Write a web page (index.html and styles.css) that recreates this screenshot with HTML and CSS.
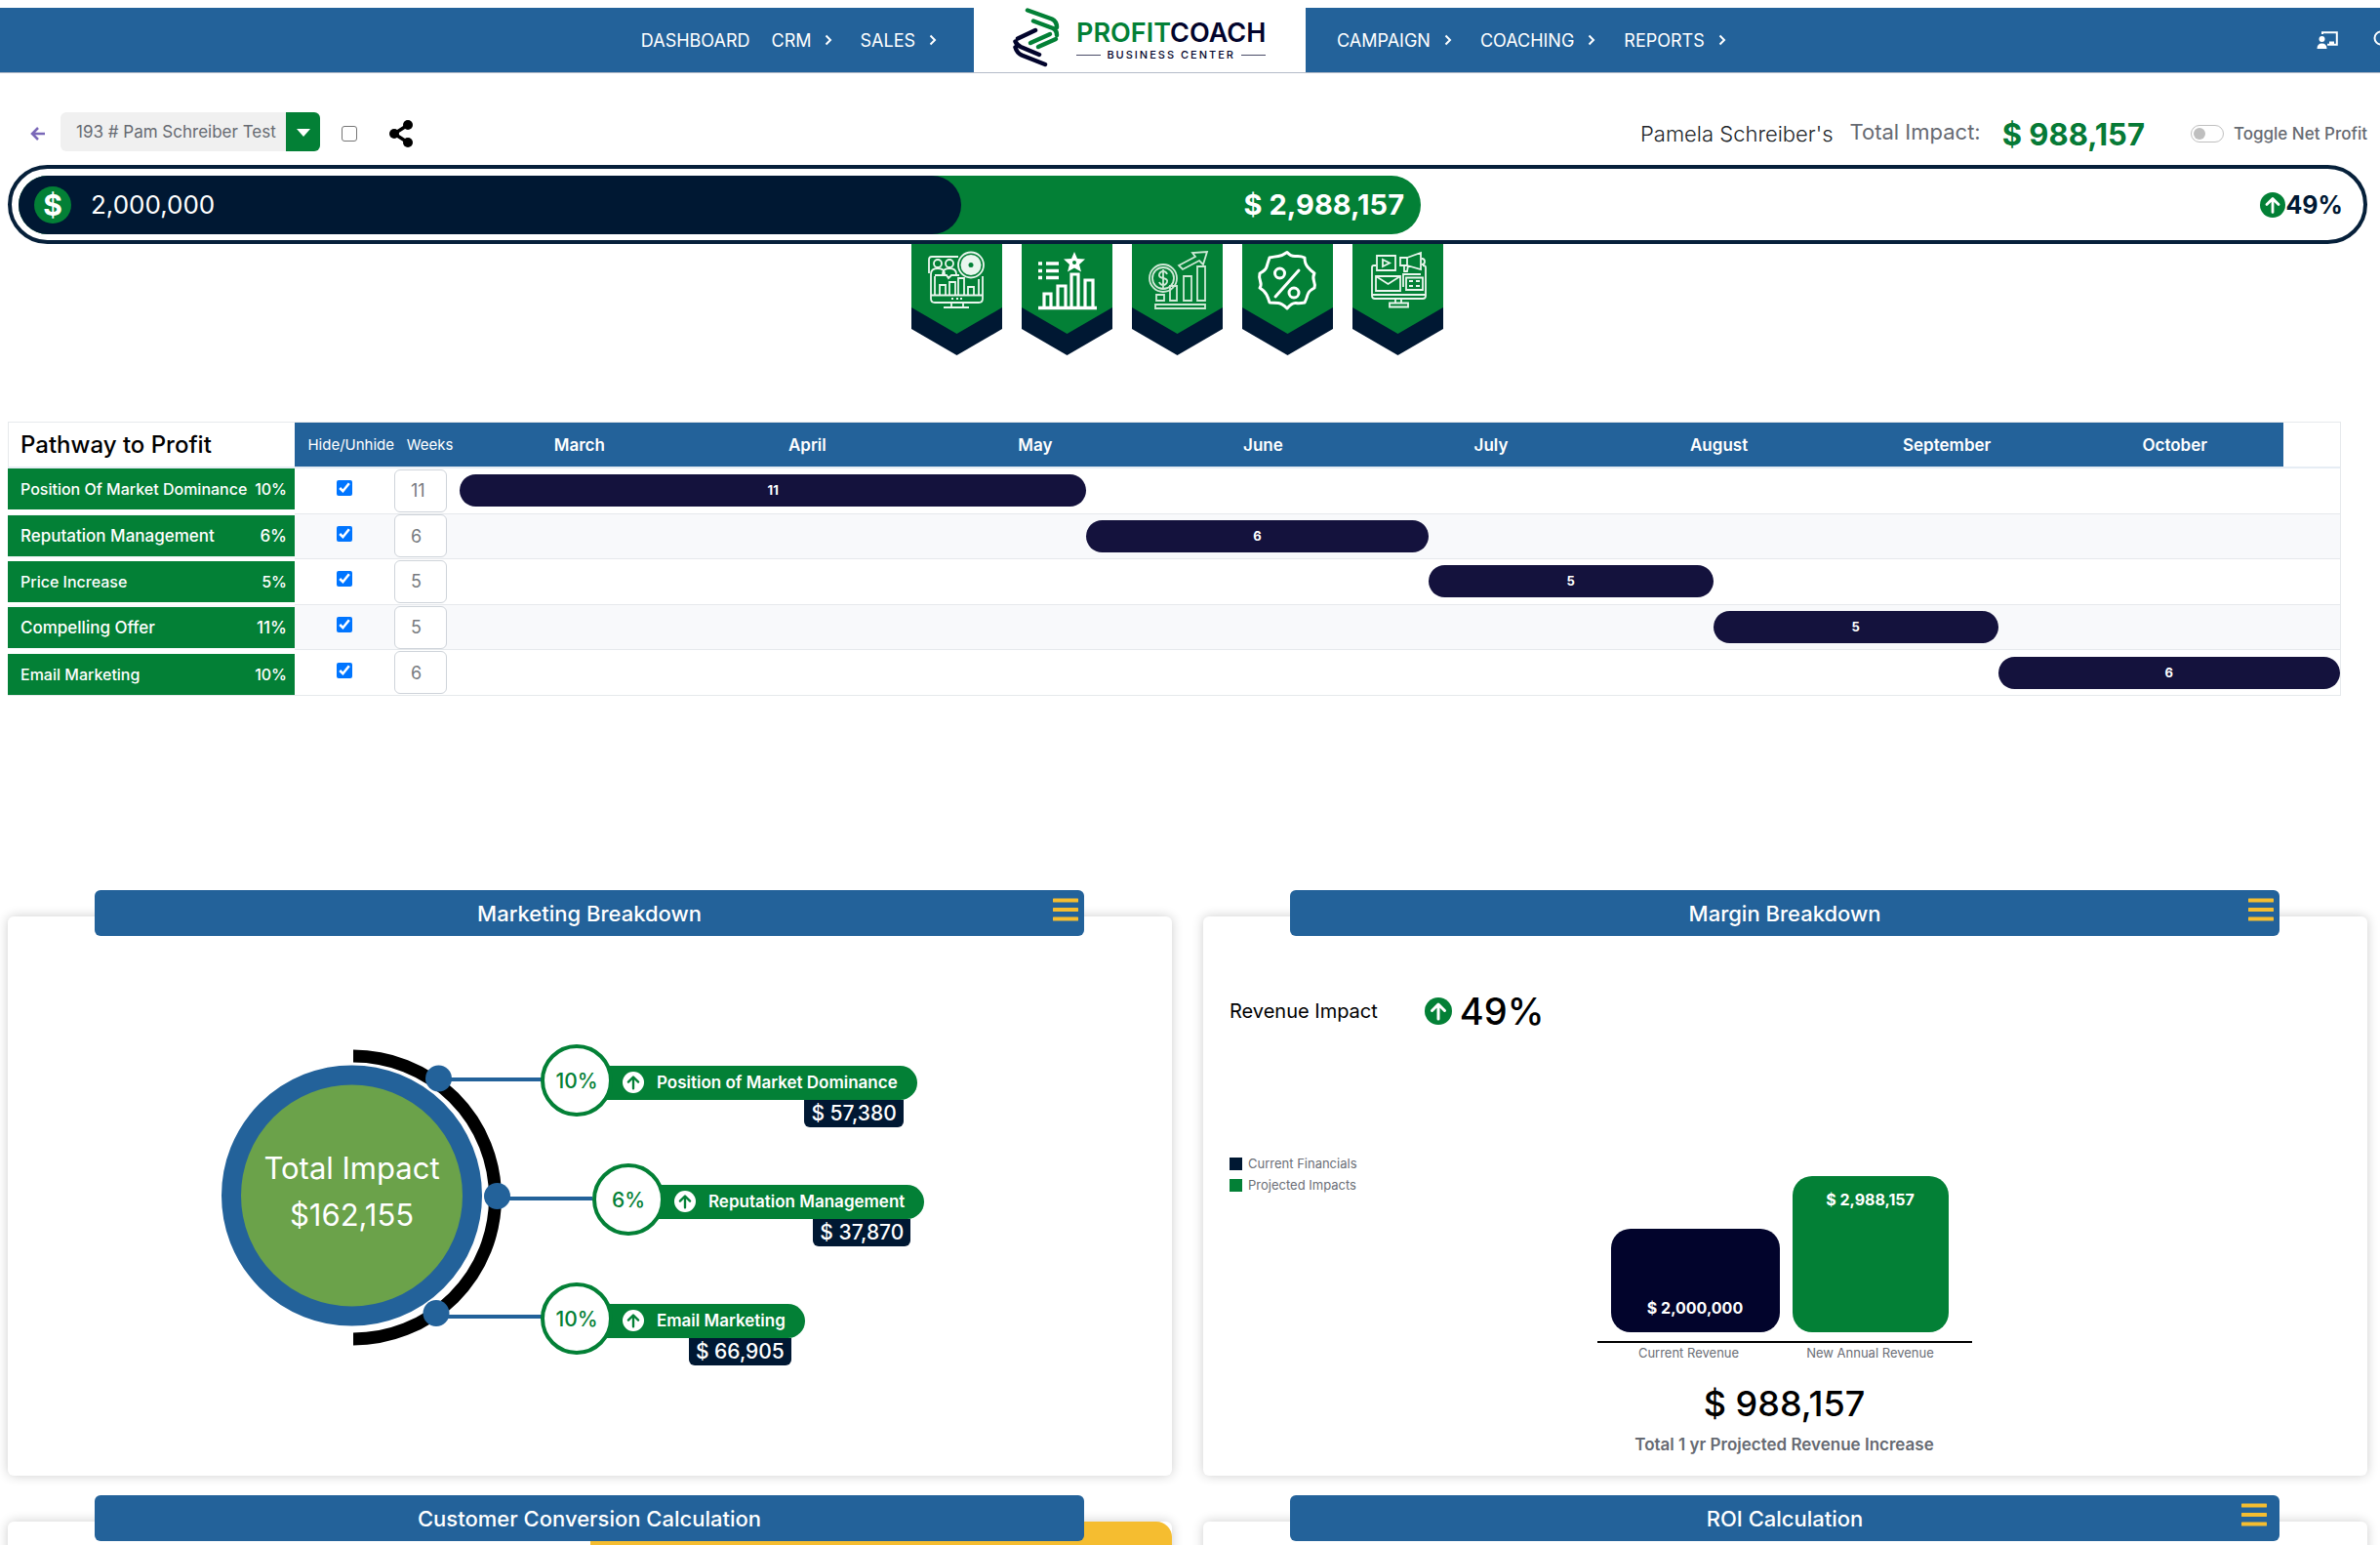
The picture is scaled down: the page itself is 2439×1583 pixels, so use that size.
FILE: index.html
```html
<!DOCTYPE html>
<html lang="en">
<head>
<meta charset="utf-8">
<title>Profit Coach Business Center</title>
<link rel="stylesheet" href="styles.css">
</head>
<body>
<svg class="defs" aria-hidden="true">
  <symbol id="up" viewBox="0 0 28 28"><circle cx="14" cy="14" r="14" fill="var(--disc)"/><path d="M14 22V7.500M7.500 13.500L14 7l6.500 6.500" fill="none" stroke="var(--arrow)" stroke-width="3" stroke-linecap="round" stroke-linejoin="round"/></symbol>
  <symbol id="chev" viewBox="0 0 8 12"><path d="M1.500 1.500L6 6l-4.500 4.500" fill="none" stroke="#fff" stroke-width="2"/></symbol>
  <symbol id="menu" viewBox="0 0 26 24"><path d="M1 2.500h24M1 12h24M1 21.500h24" stroke="#f5bd30" stroke-width="4" stroke-linecap="round"/></symbol>
  <symbol id="ribbon" viewBox="0 0 93 114"><path d="M0 60V87L46.500 114 93 87V60z" fill="#001833"/><path d="M0 0H93V65L46.500 92 0 65z" fill="#038036"/></symbol>
</svg>

<header class="nav">
  <nav class="nav-side nav-left">
    <a href="#">DASHBOARD</a>
    <a href="#">CRM <svg class="chev"><use href="#chev"/></svg></a>
    <a href="#">SALES <svg class="chev"><use href="#chev"/></svg></a>
  </nav>
  <a class="logo" href="#">
    <svg class="logo-mark" viewBox="0 0 48 62" fill="none" stroke-width="4.500" stroke-linecap="round">
      <path d="M15 2.500L40 11.500Q45 14 45 20M21 13.500L41 21Q45 23 45 28" stroke="#038036"/>
      <path d="M38 27L18 36M44 32L26 40" stroke="#038036"/>
      <path d="M23 23L5 31.500M2.500 34.500Q4 38 8 40L27 48M2.500 40.500Q4 46 9 48.500L33 58" stroke="#02042c"/>
    </svg>
    <span class="logo-text">
      <span class="logo-name"><b>PROFIT</b>COACH</span>
      <span class="logo-sub">BUSINESS CENTER</span>
    </span>
  </a>
  <nav class="nav-side nav-right">
    <a href="#">CAMPAIGN <svg class="chev"><use href="#chev"/></svg></a>
    <a href="#">COACHING <svg class="chev"><use href="#chev"/></svg></a>
    <a href="#">REPORTS <svg class="chev"><use href="#chev"/></svg></a>
    <span class="nav-icons">
      <button type="button" aria-label="Training"><svg width="22" height="18" viewBox="0 0 22 18"><path d="M6 3V1.200h14.800v12.600H11" fill="none" stroke="#fff" stroke-width="2"/><circle cx="5.500" cy="8" r="3" fill="#fff"/><path d="M.5 18q0-5.500 5-5.500t5 5.500z" fill="#fff"/><path d="M13 10.500h5v3.500h-5z" fill="#fff"/></svg></button>
      <button type="button" aria-label="Search"><svg width="20" height="20" viewBox="0 0 20 20"><circle cx="8" cy="8" r="6.500" fill="none" stroke="#fff" stroke-width="2"/><path d="M13 13l6 6" stroke="#fff" stroke-width="2"/></svg></button>
    </span>
  </nav>
</header>

<main>
  <section class="tools">
    <a class="back" href="#" aria-label="Back"><svg width="16" height="16" viewBox="0 0 16 16"><path d="M15 8H2M8 2L2 8l6 6" fill="none" stroke="#7a68b8" stroke-width="2.500"/></svg></a>
    <span class="picker">
      <select aria-label="Client"><option>193 # Pam Schreiber Test</option></select>
      <span class="picker-arrow"></span>
    </span>
    <input class="box" type="checkbox" aria-label="Select client">
    <button class="share" type="button" aria-label="Share"><svg width="24" height="28" viewBox="0 0 24 28"><path d="M19 5L5 14l14 9" fill="none" stroke="#000" stroke-width="3.500"/><circle cx="19" cy="5" r="5"/><circle cx="5" cy="14" r="5"/><circle cx="19" cy="23" r="5"/></svg></button>
    <span class="owner">Pamela Schreiber's</span>
    <span class="impact-label">Total Impact:</span>
    <strong class="impact-total">$ 988,157</strong>
    <label class="toggle"><input type="checkbox" role="switch">Toggle Net Profit</label>
  </section>

  <section class="meter">
    <div class="meter-projected">
      <div class="meter-current"><span class="coin">$</span>2,000,000</div>
      <span class="meter-value">$ 2,988,157</span>
    </div>
    <span class="meter-gain"><svg><use href="#up"/></svg>49%</span>
  </section>

  <section class="ribbons">
    <svg viewBox="0 0 93 114"><use href="#ribbon"/><g fill="none" stroke="#eaf6ee" stroke-width="1.800">
      <path d="M48 13H21q-3 0-3 3v14M20 31v25q0 4 4 4h45q4 0 4-4V33"/><path d="M24 33v19M69 36v16M20 52.500h53"/>
      <circle cx="27" cy="20" r="4"/><circle cx="39" cy="20" r="4"/><path d="M20 31q0-6 7-6t7 6M32 31q0-6 7-6t7 6M24 32h12l2 3 3-3h8"/>
      <path d="M29 52V42h6v10M39 52V39h6v13M48 52V35h6v17M58 52V44h6v8M41 60v5M53 60v5M33 65h26"/><circle cx="61" cy="21.500" r="13"/></g><circle cx="61" cy="21.500" r="10.500" fill="#eaf6ee"/><circle cx="61" cy="21.500" r="2.500" fill="#038036"/><path d="M41 56h2M46 56h2M50 56h2" stroke="#eaf6ee" stroke-width="2"/></svg>
    <svg viewBox="0 0 93 114"><use href="#ribbon"/><path d="M17 20h4M25 20h13M17 27.500h4M25 27.500h13M17 34.500h4M25 34.500h13" stroke="#fff" stroke-width="3.500"/><path d="M54 8l3 7 8 .5-6 5.500 2 7.500-7-4-7 4 2-7.500-6-5.500 8-.5z" fill="#fff"/><circle cx="54" cy="19" r="2" fill="#038036"/><path d="M17 65.500h60" stroke="#fff" stroke-width="3.500"/><path d="M23 65V51h7v14M37 65V43h8v22M51 65V31h7v34M65 65V37h8v28" fill="none" stroke="#fff" stroke-width="3.200"/></svg>
    <svg viewBox="0 0 93 114"><use href="#ribbon"/><g fill="none" stroke="#cfe9d6" stroke-width="1.800"><circle cx="32" cy="35" r="14"/><circle cx="32" cy="35" r="11"/><path d="M36 31q-1-3-4-3t-4 3 4 4 4 4-4 3-4-3M32 26v19"/><path d="M48 22l17-9-3-4 15-1-4 13-4-4-17 9zM25 52h8v6h-8zM39 43h7v15h-7zM53 33h8v25h-8zM67 23h8v35h-8zM24 62h51v4H24z"/></g></svg>
    <svg viewBox="0 0 93 114"><use href="#ribbon"/><g fill="none" stroke="#fff" stroke-width="3" stroke-linejoin="round"><path d="M46 8.500Q50 13 55 12.500T64 14q0 6 3 9.500T74 30q-2 4-.5 8T74 45q-6 3-7 7t-3 8q-5 1-9 .5T46 66q-5-5-9-5.500T28 60q-1-4-3-8t-7-7q2-3 .5-7T18 30q6-3 7-6.500T28 14q5-1 9-1.500T46 8.500z"/><circle cx="38.500" cy="30" r="5"/><circle cx="53" cy="50" r="5"/><path d="M58 27L34 54" stroke-linecap="round"/></g></svg>
    <svg viewBox="0 0 93 114"><use href="#ribbon"/><g fill="none" stroke="#eaf6ee" stroke-width="1.800"><path d="M24 22h-2q-2 0-2 2v29q0 3 3 3h49q3 0 3-3V24q0-2-3-2M20 52h55M44 56v4M50 56v4M38 60.500h19v4H38z"/><path d="M25 12h19v15H25zM31 16v7l7-3.500zM24 33h25v15H24zM24 33l12.500 8L49 33"/><path d="M49 14h7v8h-7zM56 14l14-5v17l-14-4M53 22v6h3l1-6M71 15q3 0 3 3t-3 3M52 44V31h18M55 34.500h17V47H55zM58 38h4M65 38h4M58 43h4M65 43h4"/></g></svg>
  </section>

  <table class="path">
    <colgroup><col class="c-name"><col class="c-hide"><col class="c-weeks"><col span="33"></colgroup>
    <thead>
      <tr><th class="path-title">Pathway to Profit</th><th class="small hide">Hide/Unhide</th><th class="small">Weeks</th>
      <th colspan="4">March</th><th colspan="4">April</th><th colspan="4">May</th><th colspan="4">June</th><th colspan="4">July</th><th colspan="4">August</th><th colspan="4">September</th><th colspan="4">October</th><th class="blank"></th></tr>
    </thead>
    <tbody>
      <tr><td class="first"><div class="name"><span>Position Of Market Dominance</span><span>10%</span></div></td>
        <td class="tick"><input type="checkbox" checked aria-label="Show Position Of Market Dominance"></td><td><input class="weeks" type="text" value="11" aria-label="Weeks for Position Of Market Dominance"></td>
        <td colspan="11"><div class="span">11</div></td><td colspan="22"></td></tr>
      <tr><td class="first"><div class="name large"><span>Reputation Management</span><span>6%</span></div></td>
        <td class="tick"><input type="checkbox" checked aria-label="Show Reputation Management"></td><td><input class="weeks" type="text" value="6" aria-label="Weeks for Reputation Management"></td>
        <td colspan="11"></td><td colspan="6"><div class="span">6</div></td><td colspan="16"></td></tr>
      <tr><td class="first"><div class="name"><span>Price Increase</span><span>5%</span></div></td>
        <td class="tick"><input type="checkbox" checked aria-label="Show Price Increase"></td><td><input class="weeks" type="text" value="5" aria-label="Weeks for Price Increase"></td>
        <td colspan="17"></td><td colspan="5"><div class="span">5</div></td><td colspan="11"></td></tr>
      <tr><td class="first"><div class="name large"><span>Compelling Offer</span><span>11%</span></div></td>
        <td class="tick"><input type="checkbox" checked aria-label="Show Compelling Offer"></td><td><input class="weeks" type="text" value="5" aria-label="Weeks for Compelling Offer"></td>
        <td colspan="22"></td><td colspan="5"><div class="span">5</div></td><td colspan="6"></td></tr>
      <tr><td class="first"><div class="name"><span>Email Marketing</span><span>10%</span></div></td>
        <td class="tick"><input type="checkbox" checked aria-label="Show Email Marketing"></td><td><input class="weeks" type="text" value="6" aria-label="Weeks for Email Marketing"></td>
        <td colspan="27"></td><td colspan="6"><div class="span">6</div></td></tr>
    </tbody>
  </table>

  <div class="cards">
    <section class="card">
      <header class="card-head"><h2>Marketing Breakdown</h2><button type="button" aria-label="Marketing menu"><svg><use href="#menu"/></svg></button></header>
      <div class="wheel">
        <svg class="wheel-art" width="380" height="318" viewBox="0 0 380 318">
          <circle cx="133.500" cy="155" r="123.500" fill="#6ba24a" stroke="#23629a" stroke-width="20"/>
          <path d="M135 12A145.500 145 0 0 1 135 302" fill="none" stroke="#000" stroke-width="13"/>
          <path d="M222 36H328M282 158H380M220 279H328" stroke="#23629a" stroke-width="4"/>
          <g fill="#23629a"><circle cx="222.500" cy="35" r="13.500"/><circle cx="282.500" cy="155.500" r="13.500"/><circle cx="220" cy="275.500" r="13.500"/></g>
        </svg>
        <p class="wheel-total">Total Impact<br>$162,155</p>
        <ul class="branches">
          <li><span class="pct">10%</span><div class="pill"><svg><use href="#up"/></svg>Position of Market Dominance<span class="amount">$ 57,380</span></div></li>
          <li class="far"><span class="pct">6%</span><div class="pill"><svg><use href="#up"/></svg>Reputation Management<span class="amount">$ 37,870</span></div></li>
          <li><span class="pct">10%</span><div class="pill"><svg><use href="#up"/></svg>Email Marketing<span class="amount">$ 66,905</span></div></li>
        </ul>
      </div>
    </section>

    <section class="card">
      <header class="card-head"><h2>Margin Breakdown</h2><button type="button" aria-label="Margin menu"><svg><use href="#menu"/></svg></button></header>
      <div class="margin">
        <p class="revenue">Revenue Impact <span><svg><use href="#up"/></svg>49%</span></p>
        <ul class="legend"><li><i class="navy"></i>Current Financials</li><li><i class="green"></i>Projected Impacts</li></ul>
        <div class="chart">
          <div class="bars"><div class="bar bar-current">$ 2,000,000</div><div class="bar bar-new">$ 2,988,157</div></div>
          <div class="axis"><span>Current Revenue</span><span>New Annual Revenue</span></div>
        </div>
        <p class="sum">$ 988,157</p>
        <p class="sum-note">Total 1 yr Projected Revenue Increase</p>
      </div>
    </section>

    <section class="card">
      <header class="card-head"><h2>Customer Conversion Calculation</h2></header>
      <div class="half"></div>
    </section>
    <section class="card">
      <header class="card-head roi"><h2>ROI Calculation</h2><button type="button" aria-label="ROI menu"><svg><use href="#menu"/></svg></button></header>
    </section>
  </div>
</main>
</body>
</html>
```
FILE: styles.css
```css
:root {
  --blue: #23629a;
  --green: #038036;
  --navy: #001833;
  --ink: #14123d;
  --disc: #038036;
  --arrow: #fff;
}
* { box-sizing: border-box; }
html { scrollbar-width: none; }
body { margin: 0; background: #fff; color: #000; font-family: Inter, "Liberation Sans", sans-serif; font-size: 16px; overflow-x: hidden; }
button { padding: 0; border: 0; background: none; line-height: 0; cursor: pointer; }
p, h2, ul { margin: 0; padding: 0; font-weight: 400; list-style: none; }
.defs { position: absolute; width: 0; height: 0; }

/* Top navigation */
.nav { display: grid; grid-template-columns: 998fr 340fr 1101fr; height: 67px; margin-top: 8px; border-bottom: 1px solid #b4bcc8; }
.nav-side { display: flex; align-items: center; background: var(--blue); overflow: hidden; }
.nav-side a { display: flex; align-items: center; gap: 14px; color: #fff; font-size: 18px; text-decoration: none; }
.nav-left { justify-content: flex-end; padding-right: 38px; }
.nav-left a + a { margin-left: 22px; }
.nav-left a + a + a { margin-left: 28px; }
.nav-right { padding-left: 32px; gap: 29px; }
.chev { width: 8px; height: 12px; }
.nav-icons { display: flex; gap: 36px; margin: 0 -13px 0 auto; }
.logo { display: flex; align-items: center; padding: 0 40px; gap: 17px; color: #02042c; text-decoration: none; }
.logo-mark { width: 48px; height: 62px; margin-bottom: 4px; }
.logo-text { display: flex; flex-direction: column; }
.logo-name { font-size: 27px; font-weight: 600; line-height: 30px; }
.logo-name b { color: var(--green); font-weight: 600; }
.logo-sub { display: flex; align-items: center; gap: 6px; font-size: 11px; font-weight: 500; letter-spacing: 2px; line-height: 14px; white-space: nowrap; }
.logo-sub::before, .logo-sub::after { content: ""; flex: 1; height: 1px; background: #4a4c68; }

/* Client tools */
main { padding: 0 13px 0 8px; }
.tools { display: flex; align-items: center; height: 60px; margin-top: 34px; padding-bottom: 4px; }
.tools .back { display: flex; margin-left: 23px; }
.picker { position: relative; width: 266px; height: 40px; margin: 0 22px 4px 15px; }
.picker select { appearance: none; width: 100%; height: 100%; padding: 0 36px 0 16px; border: 0; border-radius: 6px; background: #f0f0f0; color: #666a72; font: 17px Inter, sans-serif; }
.picker-arrow { position: absolute; top: 0; right: 0; width: 35px; height: 40px; border-radius: 0 6px 6px 0; background: var(--green); pointer-events: none; }
.picker-arrow::after { content: ""; position: absolute; top: 17px; left: 11px; border: 7px solid transparent; border-top: 8px solid #fff; border-bottom: 0; }
.box { appearance: none; width: 16px; height: 16px; margin: 0; border: 1px solid #767676; border-radius: 3px; }
.share { margin-left: 33px; }
.owner { margin-left: auto; font-size: 22px; font-weight: 300; color: #212529; }
.impact-label { margin-left: 17px; font-size: 22px; color: #666a72; padding-bottom: 4px; }
.impact-total { margin-left: 22px; font-size: 31px; font-weight: 700; color: #067a36; }
.toggle { display: flex; align-items: center; gap: 10px; margin-left: 47px; font-size: 17px; font-weight: 500; color: #666a72; }
.toggle input { appearance: none; width: 34px; height: 18px; margin: 0; padding: 2px; border: 1px solid #bfbfbf; border-radius: 9px; }
.toggle input::before { content: ""; display: block; width: 12px; height: 12px; border-radius: 50%; background: #bfbfbf; }

/* Revenue meter */
.meter { display: flex; align-items: center; justify-content: space-between; height: 81px; padding: 0 8px 0 7px; border: 4px solid #06203a; border-radius: 41px; }
.meter-projected { display: flex; align-items: center; justify-content: space-between; width: 60%; height: 60px; padding-right: 17px; border-radius: 30px; background: var(--green); color: #fff; }
.meter-current { display: flex; align-items: center; gap: 20px; width: 68%; height: 60px; padding-left: 16px; border-radius: 30px; background: var(--navy); font-size: 26px; }
.coin { display: grid; place-items: center; width: 38px; height: 38px; border-radius: 50%; background: var(--green); font-weight: 700; font-size: 30px; }
.meter-value { font-size: 29px; font-weight: 700; }
.meter-gain { display: flex; align-items: center; padding-right: 13px; color: var(--navy); font-size: 25px; font-weight: 700; }
.meter-gain svg { width: 26px; height: 26px; }
.ribbons { display: flex; justify-content: center; gap: 20px; padding-right: 21px; }
.ribbons svg { width: 93px; height: 114px; }

/* Pathway table */
.path { width: calc(100% - 27px); height: 281px; margin-top: 68px; border-collapse: separate; border-spacing: 0; table-layout: fixed; border: 1px solid #e6e9ec; border-left: 0; }
.path th, .path td { padding: 0; }
.path td { border-bottom: 1px solid #e6e9ec; }
.path tbody tr:last-child td { border-bottom: 0; }
.path tbody tr:nth-child(even) td { background: #f8f9fb; }
.path thead th { height: 47px; padding-left: 12px; background: var(--blue); color: #fff; font-size: 17px; font-weight: 600; border-bottom: 2px solid #e6edf4; }
.path thead .small { padding-left: 6px; font-size: 15px; font-weight: 400; }
.path thead .hide { text-align: right; }
.path thead .blank { background: #fff; }
.path thead .path-title { border-left: 1px solid #e6e9ec; background: #fff; color: #000; font-size: 24px; font-weight: 500; text-align: left; }
.c-name { width: 294px; }
.c-hide { width: 102px; }
.c-weeks { width: 67px; }
.path tbody .first { background: #fff; border-bottom-color: #fff; }
.path tbody tr:first-child .first { vertical-align: top; }
.path tbody tr:last-child .first { vertical-align: bottom; }
.name { display: flex; align-items: center; justify-content: space-between; height: 42px; padding: 0 8px 0 13px; background: var(--green); color: #fff; font-size: 16px; font-weight: 500; }
.name.large { font-size: 17px; }
.tick { text-align: center; }
.tick input { width: 16px; height: 16px; margin: 0 0 6px; vertical-align: middle; accent-color: #0075ff; }
.weeks { display: block; width: 54px; height: 44px; padding: 0 16px; border: 1px solid #cfd4da; border-radius: 6px; background: #fff; color: #777b80; font: 18px Inter, sans-serif; }
.span { height: 33px; border-radius: 17px; background: var(--ink); color: #fff; font-size: 13px; font-weight: 700; line-height: 33px; text-align: center; }

/* Cards */
.cards { display: grid; grid-template-columns: 1fr 1fr; gap: 47px 32px; margin-top: 226px; }
.card { min-height: 573px; border-radius: 6px; background: #fff; box-shadow: 0 0 12px rgba(0, 0, 0, .2); }
.card-head { position: relative; display: flex; align-items: center; justify-content: center; width: 85%; height: 47px; margin: -27px 0 0 89px; border-radius: 6px; background: var(--blue); color: #fff; }
.card-head h2 { font-size: 22px; font-weight: 500; }
.card-head button { position: absolute; top: 8px; right: 6px; }
.card-head.roi button { right: 13px; }
.card-head svg { width: 26px; height: 24px; }
.half { width: 50%; height: 200px; margin: -20px 0 0 auto; border-radius: 0 16px 0 0; background: #f5bd30; }

/* Total impact wheel */
.wheel { position: relative; margin: 111px 0 0 219px; }
.wheel-art { position: absolute; top: 0; left: 0; }
.wheel-total { position: absolute; top: 103px; left: 0; width: 267px; color: #fff; font-size: 31px; line-height: 48px; text-align: center; }
.branches { display: flex; flex-direction: column; gap: 48px; padding-left: 327px; }
.branches li { display: flex; align-items: center; height: 74px; }
.branches .far { margin-left: 53px; }
.pct { position: relative; z-index: 1; display: grid; place-items: center; width: 74px; height: 74px; border: 4px solid var(--green); border-radius: 50%; background: #fff; color: var(--green); font-size: 21px; font-weight: 500; }
.pill { --disc: #fff; --arrow: #038036; position: relative; display: flex; align-items: center; gap: 13px; height: 35px; margin: 4px 0 0 -10px; padding: 0 20px; border-radius: 0 18px 18px 0; background: var(--green); color: #fff; font-size: 17px; font-weight: 600; white-space: nowrap; }
.pill svg { width: 22px; height: 22px; }
.amount { position: absolute; top: 35px; right: 14px; padding: 0 7px; border-radius: 0 0 6px 6px; background: var(--navy); font-size: 21px; font-weight: 500; line-height: 28px; }

/* Margin breakdown */
.margin { padding: 53px 29px 0 27px; text-align: center; }
.revenue { display: flex; align-items: center; gap: 48px; height: 48px; font-size: 20px; }
.revenue span { display: flex; align-items: center; gap: 8px; font-size: 38px; font-weight: 500; }
.revenue svg { width: 28px; height: 28px; }
.legend { margin-top: 121px; color: #6a6e76; font-size: 13px; text-align: left; }
.legend li { display: flex; align-items: center; gap: 6px; height: 22px; }
.legend i { width: 13px; height: 13px; }
.navy { background: var(--navy); }
.green { background: var(--green); }
.chart { width: 384px; margin: -20px auto 0; }
.bars { display: flex; align-items: flex-end; gap: 13px; padding: 0 14px 9px; border-bottom: 2px solid #000; }
.bar { display: flex; justify-content: center; border-radius: 20px; color: #fff; font-size: 16px; font-weight: 700; }
.bar-current { align-items: flex-end; width: 173px; height: 106px; padding-bottom: 15px; background: #02042c; }
.bar-new { width: 160px; height: 160px; padding-top: 14px; background: var(--green); }
.axis { display: grid; grid-template-columns: 188px 184px; color: #6a6e76; font-size: 13px; line-height: 20px; }
.sum { margin-top: 20px; font-size: 36px; font-weight: 500; line-height: 44px; }
.sum-note { margin-top: 8px; color: #666a72; font-size: 17px; font-weight: 600; line-height: 24px; }
```
